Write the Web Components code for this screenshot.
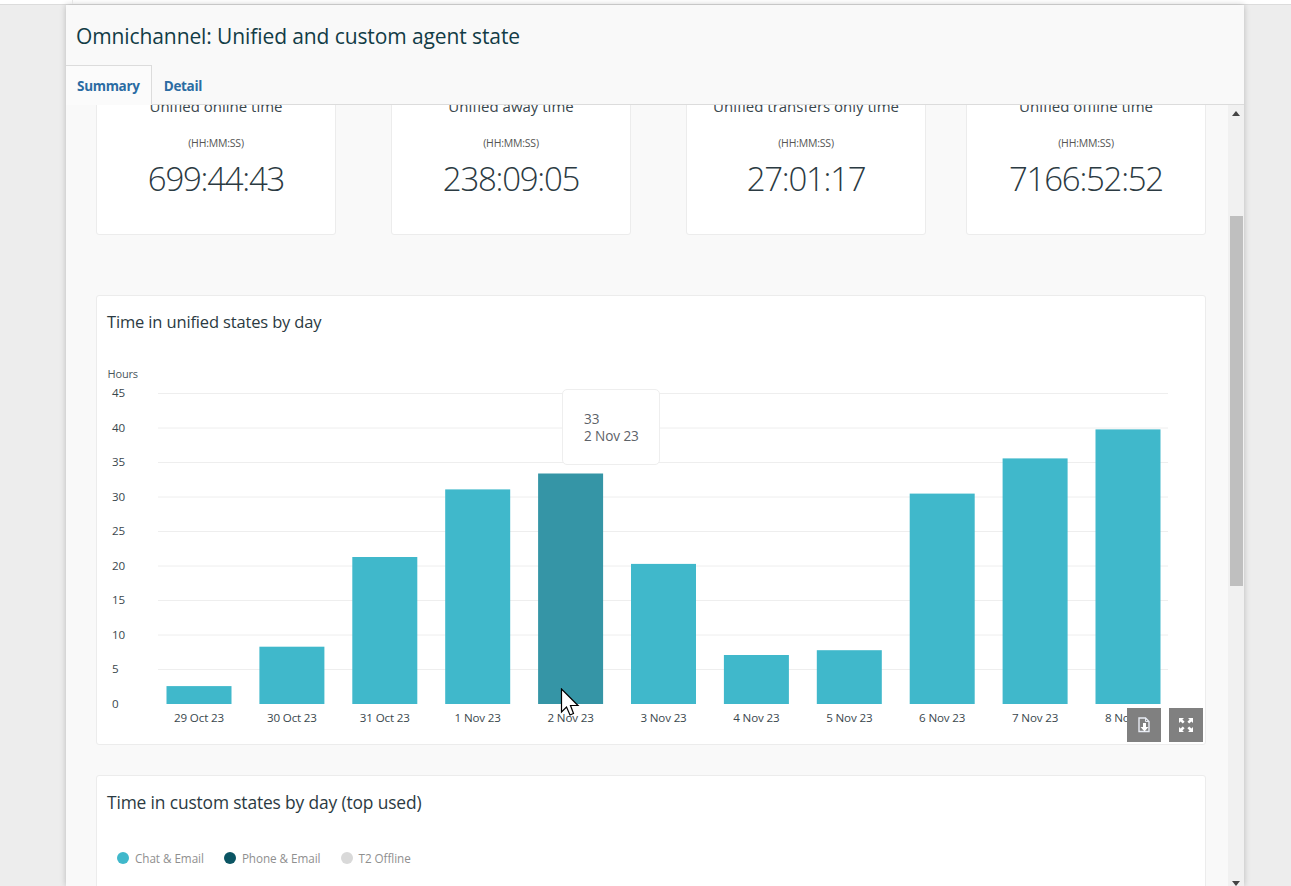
<!DOCTYPE html>
<html lang="en">
<head>
<meta charset="utf-8">
<title>Omnichannel: Unified and custom agent state</title>
<style>
  html, body { margin: 0; height: 100%; overflow: hidden; }
  body { background: #ededed; font-family: "Open Sans", "Noto Sans", sans-serif; color: #2b3a42; }
</style>
</head>
<body>
<report-page heading="Omnichannel: Unified and custom agent state">
  <report-tab slot="tabs" active>Summary</report-tab>
  <report-tab slot="tabs">Detail</report-tab>

  <kpi-card label="Unified online time" value="699:44:43"></kpi-card>
  <kpi-card label="Unified away time" value="238:09:05"></kpi-card>
  <kpi-card label="Unified transfers only time" value="27:01:17"></kpi-card>
  <kpi-card label="Unified offline time" value="7166:52:52" style="margin-left:-15px"></kpi-card>

  <chart-card slot="charts" heading="Time in unified states by day" style="height:450px;--title-size:16.5px">
    <bar-chart></bar-chart>
  </chart-card>
  <chart-card slot="charts" heading="Time in custom states by day (top used)" style="height:300px;--title-size:17.4px">
    <chart-legend></chart-legend>
  </chart-card>
</report-page>

<script>
class ReportPage extends HTMLElement {
  constructor() {
    super();
    this.attachShadow({ mode: 'open' });
  }

  connectedCallback() {
    this.shadowRoot.innerHTML = `
      <style>
        :host { display: block; height: 100%; }
        .strip { height: 4px; background: #fff; border-bottom: 1px solid #dcdcdc; display: flex; }
        .strip i { width: 72px; border-right: 1px solid #e6e6e6; }
        .panel {
          margin: 0 47px 0 66px;
          height: 881px;
          background: #f9f9f9;
          box-shadow: 0 0 6px rgba(0, 0, 0, .22);
          display: flex;
          flex-direction: column;
          overflow: hidden;
        }
        header { height: 100px; flex: none; box-sizing: border-box; border-bottom: 1px solid #dcdcdc; display: flex; flex-direction: column; }
        h1 { margin: 0; padding: 16px 0 0 10px; font-size: 21px; line-height: 30px; font-weight: 400; color: #123c46; flex: 1; letter-spacing: -.1px; }
        nav { display: flex; height: 40px; margin-bottom: -1px; position: relative; }
        .body { flex: 1; display: flex; min-height: 0; }
        .scroll { flex: 1; overflow: hidden; padding: 0 22px 0 30px; }
        .kpis { display: flex; gap: 55px; margin-top: -40px; }
        .charts { display: flex; flex-direction: column; gap: 30px; margin-top: 60px; }
        .bar { width: 16px; flex: none; background: #f1f1f1; display: flex; flex-direction: column; align-items: center; position: relative; }
        .bar::before { content: ''; position: absolute; top: 6px; border: 4px solid transparent; border-top: 0; border-bottom: 5px solid #444; }
        .bar::after { content: ''; position: absolute; bottom: 0; border: 4px solid transparent; border-bottom: 0; border-top: 5px solid #444; }
        .thumb { width: 13px; height: 370px; margin-top: 111px; background: #bfbfbf; }
      </style>
      <div class="strip"><i></i></div>
      <section class="panel">
        <header>
          <h1>${this.getAttribute('heading')}</h1>
          <nav><slot name="tabs"></slot></nav>
        </header>
        <div class="body">
          <div class="scroll">
            <div class="kpis"><slot></slot></div>
            <div class="charts"><slot name="charts"></slot></div>
          </div>
          <div class="bar"><div class="thumb"></div></div>
        </div>
      </section>
    `;
  }
}

class ReportTab extends HTMLElement {
  constructor() {
    super();
    this.attachShadow({ mode: 'open' });
    this.shadowRoot.innerHTML = `
      <style>
        :host {
          display: flex;
          align-items: center;
          box-sizing: border-box;
          height: 40px;
          padding: 1px 12px 0;
          font-size: 13.5px;
          font-weight: 700;
          letter-spacing: -.3px;
          color: #2b6ca3;
          border: 1px solid transparent;
          border-left: 0;
        }
        :host([active]) { padding: 1px 11px 0; background: #fbfbfb; border-color: #dcdcdc; border-bottom-color: #fbfbfb; }
      </style>
      <slot></slot>
    `;
  }
}

class KpiCard extends HTMLElement {
  constructor() {
    super();
    this.attachShadow({ mode: 'open' });
  }

  connectedCallback() {
    this.shadowRoot.innerHTML = `
      <style>
        :host {
          display: block;
          flex: none;
          width: 240px;
          height: 170px;
          box-sizing: border-box;
          background: #fff;
          border: 1px solid #ececec;
          border-radius: 3px;
          text-align: center;
          padding-top: 30px;
        }
        .label { font-size: 15px; line-height: 20px; color: #3a474d; }
        .unit { font-size: 10.5px; line-height: 14px; margin-top: 20px; color: #555; letter-spacing: -.2px; }
        .value { font-size: 33px; line-height: 44px; margin-top: 7px; color: #2b3a42; letter-spacing: -1.25px; font-weight: 300; }
      </style>
      <div class="label">${this.getAttribute('label')}</div>
      <div class="unit">(HH:MM:SS)</div>
      <div class="value">${this.getAttribute('value')}</div>
    `;
  }
}

class ChartCard extends HTMLElement {
  constructor() {
    super();
    this.attachShadow({ mode: 'open' });
  }

  connectedCallback() {
    this.shadowRoot.innerHTML = `
      <style>
        :host {
          display: block;
          position: relative;
          box-sizing: border-box;
          background: #fff;
          border: 1px solid #ececec;
          border-radius: 3px;
        }
        h2 { margin: 0; padding: 14px 0 0 10px; font-size: var(--title-size, 16px); line-height: 24px; font-weight: 400; color: #2b3a42; letter-spacing: -.15px; }
      </style>
      <h2>${this.getAttribute('heading')}</h2>
      <slot></slot>
    `;
  }
}

// day label and hours for each bar
const DAYS = [
  ['29 Oct 23', 2.6], ['30 Oct 23', 8.3], ['31 Oct 23', 21.3], ['1 Nov 23', 31.1],
  ['2 Nov 23', 33.4], ['3 Nov 23', 20.3], ['4 Nov 23', 7.1], ['5 Nov 23', 7.8],
  ['6 Nov 23', 30.5], ['7 Nov 23', 35.6], ['8 Nov 23', 39.8]
];

class BarChart extends HTMLElement {
  constructor() {
    super();
    this.attachShadow({ mode: 'open' });
  }

  connectedCallback() {
    const base = 408;
    const step = 34.5;
    let grid = '';
    for (let v = 0; v <= 45; v += 5) {
      const y = base - v / 5 * step;
      if (v > 0) grid += `<line x1="61" x2="1071" y1="${y}" y2="${y}" stroke="#eeeeee"/>`;
      grid += `<text x="15" y="${y + 3.5}" class="tick">${v}</text>`;
    }
    const bars = DAYS.map(([day, v], i) => {
      const x = 69.5 + i * 92.9;
      const h = v / 5 * step;
      const fill = i === 4 ? '#3595a6' : '#40b8cb';
      return `<rect x="${x.toFixed(1)}" y="${(base - h).toFixed(1)}" width="65" height="${h.toFixed(1)}" fill="${fill}"/>
        <text x="${(x + 32.5).toFixed(1)}" y="426" text-anchor="middle" class="tick">${day}</text>`;
    }).join('');

    this.shadowRoot.innerHTML = `
      <style>
        :host { display: block; position: absolute; left: 0; top: 0; right: 0; bottom: 0; }
        .plot { position: absolute; left: 0; top: 0; }
        .tick { font-size: 11.6px; fill: #3a474d; letter-spacing: -.15px; }
        .axis { font-size: 11px; fill: #4a565c; letter-spacing: -.15px; }
        .tip {
          position: absolute;
          left: 465px;
          top: 93px;
          width: 98px;
          height: 76px;
          box-sizing: border-box;
          padding: 20px 0 0 21px;
          background: #fff;
          border: 1px solid #eeeeee;
          border-radius: 5px;
          font-size: 13.6px;
          line-height: 17px;
          color: #5d6268;
          letter-spacing: -.1px;
        }
        .tools { position: absolute; right: 2px; bottom: 2px; display: flex; gap: 8px; }
        .tool { width: 34px; height: 34px; background: #808080; display: flex; align-items: center; justify-content: center; }
        .cursor { position: absolute; left: 463px; top: 392px; }
      </style>
      <svg class="plot" width="1108" height="448" viewBox="0 0 1108 448">
        <text x="10.5" y="82" class="axis">Hours</text>
        ${grid}
        ${bars}
      </svg>
      <div class="tip">33<br>2 Nov 23</div>
      <svg class="cursor" width="20" height="30" viewBox="0 0 20 30">
        <path d="M1.5 1 V24 L6.5 19 L10 27 L13.5 25.5 L10.5 17.5 H18 Z" fill="#fff" stroke="#000" stroke-width="1.2" stroke-linejoin="miter"/>
      </svg>
      <div class="tools">
        <div class="tool">
          <svg width="16" height="18" viewBox="0 0 16 18">
            <path d="M3 2 H9.5 L13 5.5 V15.5 H3 Z" fill="none" stroke="#e8ecf4" stroke-width="1.4"/>
            <path d="M9.5 2 V5.5 H13" fill="none" stroke="#e8ecf4" stroke-width="1"/>
            <path d="M7 7 H10 V11 H12.5 L8.5 15.5 L4.5 11 H7 Z" fill="#fff"/>
          </svg>
        </div>
        <div class="tool">
          <svg width="16" height="16" viewBox="0 0 16 16">
            <path d="M1 1 H6 L4.4 2.6 L6.6 4.8 L4.8 6.6 L2.6 4.4 L1 6 Z M15 1 V6 L13.4 4.4 L11.2 6.6 L9.4 4.8 L11.6 2.6 L10 1 Z M1 15 V10 L2.6 11.6 L4.8 9.4 L6.6 11.2 L4.4 13.4 L6 15 Z M15 15 H10 L11.6 13.4 L9.4 11.2 L11.2 9.4 L13.4 11.6 L15 10 Z" fill="#fff"/>
          </svg>
        </div>
      </div>
    `;
  }
}

class ChartLegend extends HTMLElement {
  constructor() {
    super();
    this.attachShadow({ mode: 'open' });
    const items = [['Chat & Email', '#40b8cb'], ['Phone & Email', '#0b5563'], ['T2 Offline', '#d9d9d9']];
    this.shadowRoot.innerHTML = `
      <style>
        :host { display: flex; gap: 20px; padding: 36px 0 0 20px; font-size: 11.7px; line-height: 16px; color: #8f8f8f; letter-spacing: -.05px; }
        .item { display: flex; align-items: center; gap: 6px; }
        i { width: 12px; height: 12px; border-radius: 50%; }
      </style>
      ${items.map(([name, color]) => `<div class="item"><i style="background:${color}"></i><span>${name.replace('&', '&amp;')}</span></div>`).join('')}
    `;
  }
}

customElements.define('report-page', ReportPage);
customElements.define('report-tab', ReportTab);
customElements.define('kpi-card', KpiCard);
customElements.define('chart-card', ChartCard);
customElements.define('bar-chart', BarChart);
customElements.define('chart-legend', ChartLegend);
</script>
</body>
</html>
